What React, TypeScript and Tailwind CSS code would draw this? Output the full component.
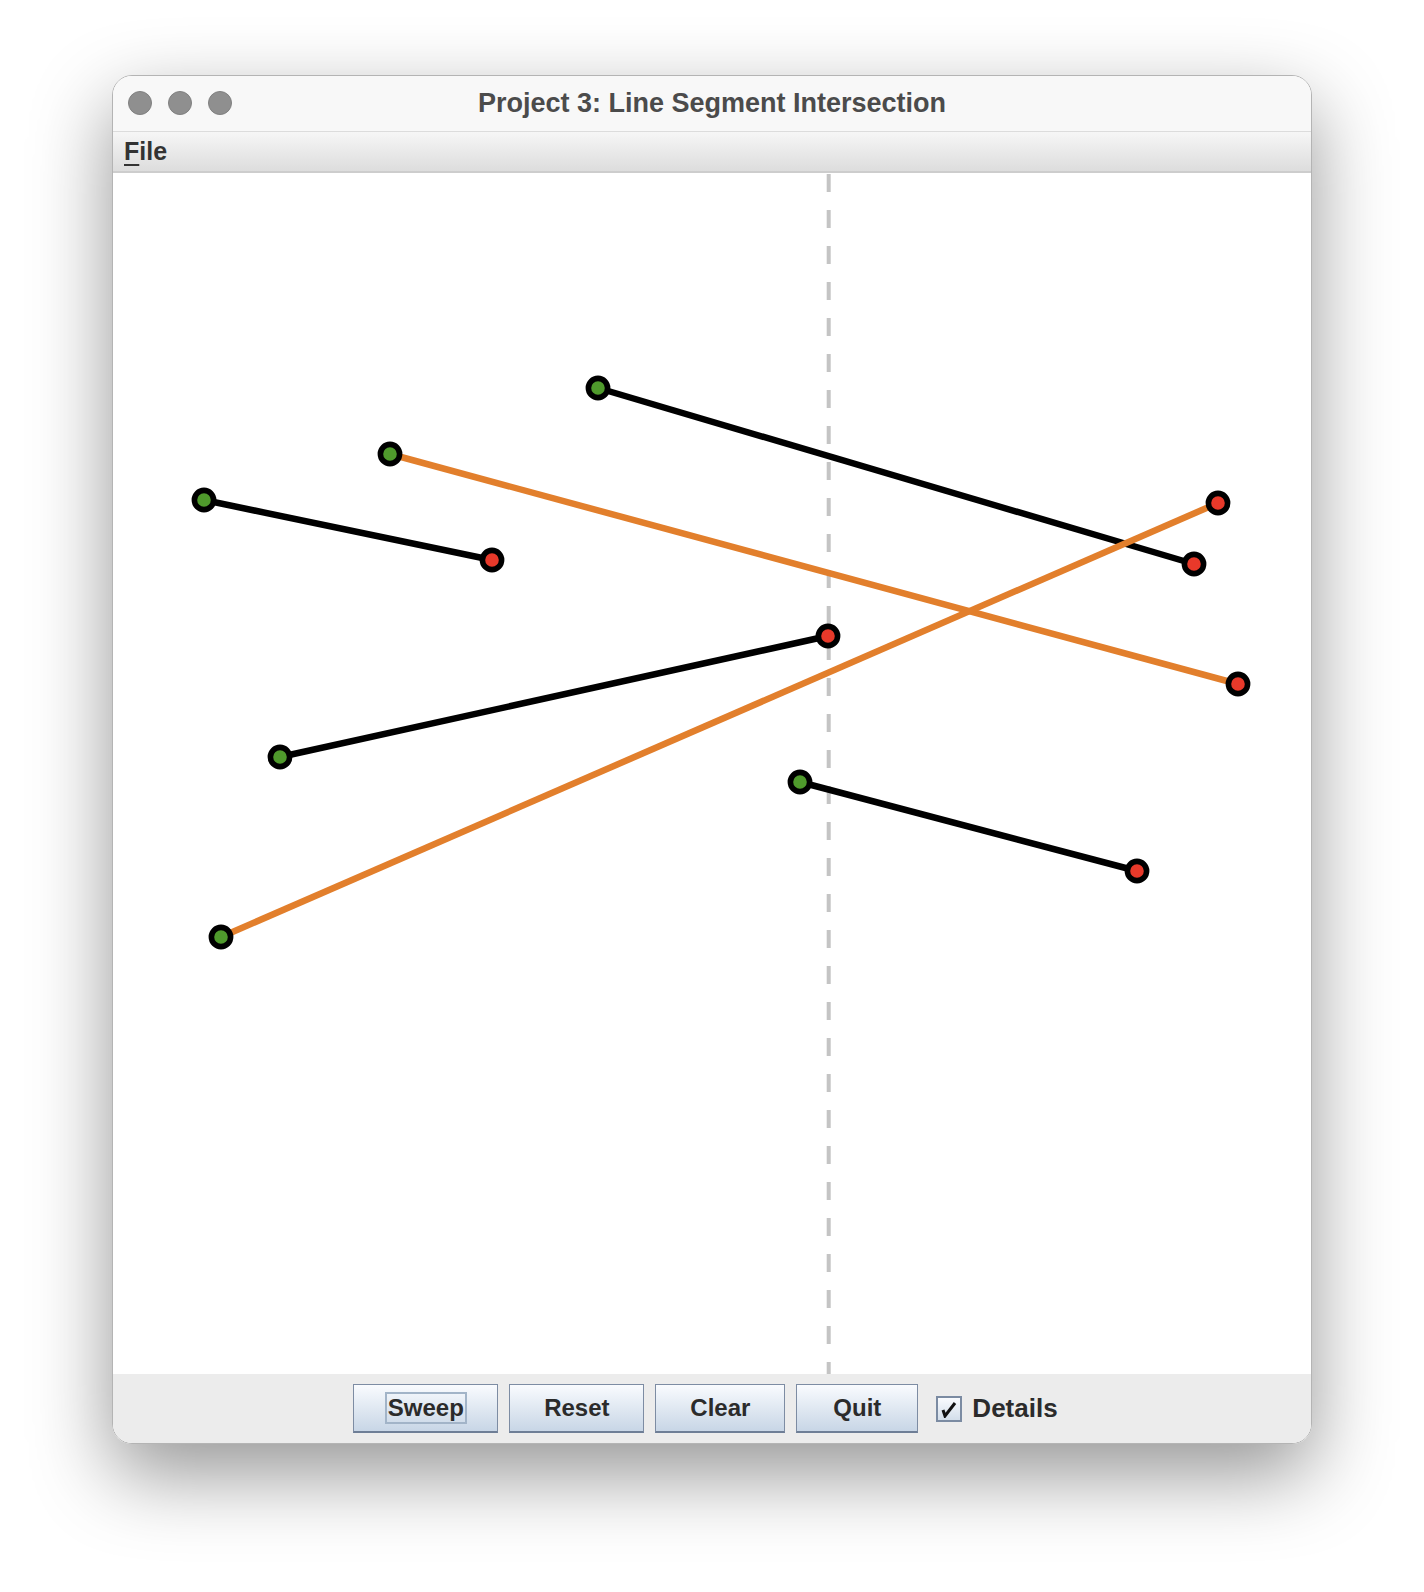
import React from "react";

type Seg = { x1: number; y1: number; x2: number; y2: number; hot?: boolean };

// page coordinates of each segment (green = left end, red = right end)
const SEGMENTS: Seg[] = [
  { x1: 598, y1: 388, x2: 1194, y2: 564 },
  { x1: 204, y1: 500, x2: 492, y2: 560 },
  { x1: 280, y1: 757, x2: 828, y2: 636 },
  { x1: 800, y1: 782, x2: 1137, y2: 871 },
  { x1: 390, y1: 454, x2: 1238, y2: 684, hot: true },
  { x1: 221, y1: 937, x2: 1218, y2: 503, hot: true },
];

const SWEEP_X = 828.7;

const BUTTONS = [
  { label: "Sweep", w: "w-[145px]", focus: true },
  { label: "Reset", w: "w-[135px]" },
  { label: "Clear", w: "w-[130px]" },
  { label: "Quit", w: "w-[122px]" },
];

function Endpoint({ x, y, fill }: { x: number; y: number; fill: string }) {
  return <circle cx={x} cy={y} r={9.6} fill={fill} stroke="#000" strokeWidth={5.6} />;
}

function Canvas() {
  return (
    <div className="h-[1201px] bg-white">
      <svg width="100%" height="100%" viewBox="113 173 1198 1201" className="block">
        <line
          x1={SWEEP_X}
          y1={174}
          x2={SWEEP_X}
          y2={1374}
          stroke="#c4c4c4"
          strokeWidth={4}
          strokeDasharray="18 18"
        />
        {SEGMENTS.map((s, i) => (
          <g key={i}>
            <line
              x1={s.x1}
              y1={s.y1}
              x2={s.x2}
              y2={s.y2}
              stroke={s.hot ? "#e27f2c" : "#000"}
              strokeWidth={6.5}
            />
            <Endpoint x={s.x1} y={s.y1} fill="#4f9a2c" />
            <Endpoint x={s.x2} y={s.y2} fill="#e8392a" />
          </g>
        ))}
      </svg>
    </div>
  );
}

export default function App() {
  return (
    <div
      className="min-h-[1592px] bg-white pt-[75px]"
      style={{ fontFamily: '"Liberation Sans", Arial, sans-serif' }}
    >
      <div className="w-[1200px] mx-auto rounded-[20px] overflow-hidden border border-[#b4b4b4] shadow-[0_30px_80px_rgba(0,0,0,0.42)]">
        {/* Title bar */}
        <div className="relative h-[56px] bg-[#f8f8f8] border-b border-[#dcdcdc] flex items-center justify-center">
          <div className="absolute left-[15px] top-[15px] flex gap-[16px]">
            <span className="w-[24px] h-[24px] rounded-full bg-[#8f8f8f] border border-[#808080]" />
            <span className="w-[24px] h-[24px] rounded-full bg-[#8f8f8f] border border-[#808080]" />
            <span className="w-[24px] h-[24px] rounded-full bg-[#8f8f8f] border border-[#808080]" />
          </div>
          <h1 className="text-[27px] font-bold text-[#4b4b4b]">
            Project 3: Line Segment Intersection
          </h1>
        </div>

        {/* Menu bar */}
        <div className="h-[41px] bg-gradient-to-b from-[#f6f6f6] to-[#dddddd] border-b-2 border-[#cdcdcd] flex items-center px-[11px]">
          <span className="text-[25px] font-bold text-[#333]">
            <span className="underline underline-offset-[4px] decoration-[2px]">F</span>ile
          </span>
        </div>

        <Canvas />

        {/* Button panel */}
        <div className="h-[69px] bg-[#ececec] flex items-center justify-center gap-[11px] pr-[13px]">
          {BUTTONS.map((b) => (
            <button
              key={b.label}
              className={`${b.w} h-[49px] flex items-center justify-center bg-gradient-to-b from-[#f9fbfe] to-[#c8d6e6] border border-[#7d8ca3] border-b-2 border-b-[#6e7e96] text-[24px] font-bold text-[#2b2b2b]`}
            >
              {b.focus ? (
                <span className="border-2 border-[#a2b4c8] px-[1px] h-[32px] leading-[28px]">{b.label}</span>
              ) : (
                b.label
              )}
            </button>
          ))}
          <div className="flex items-center gap-[10px] ml-[7px]">
            <span className="w-[26px] h-[26px] border-2 border-[#7b8ba2] bg-gradient-to-b from-[#f9fbfe] to-[#d3deea] flex items-center justify-center">
              <svg width="18" height="18" viewBox="0 0 18 18">
                <path d="M3 10 L5 16 L15 3" fill="none" stroke="#111" strokeWidth={3} strokeLinejoin="miter" />
              </svg>
            </span>
            <span className="text-[26px] font-bold text-[#2b2b2b]">Details</span>
          </div>
        </div>
      </div>
    </div>
  );
}
